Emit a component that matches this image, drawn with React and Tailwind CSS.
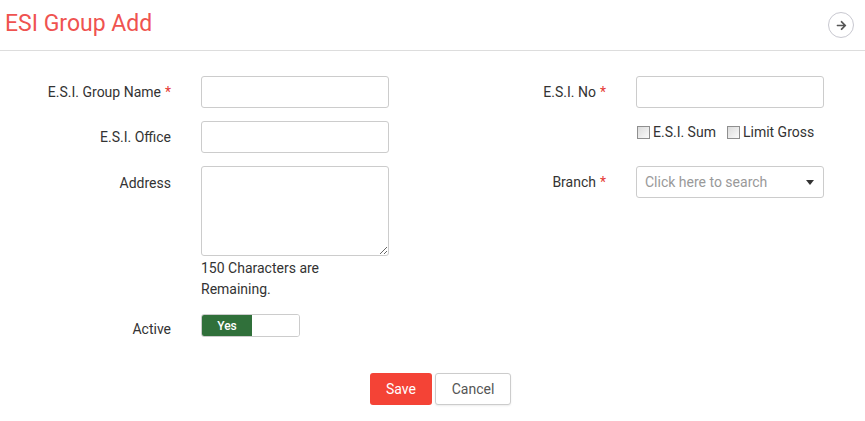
import React, { useState } from 'react';
import { FaArrowRight } from 'react-icons/fa';

const Label = ({ children, required, top, pt }) => (
  <div className={`w-[171px] shrink-0 text-right text-[14px] text-[#333] ${top ? pt || 'pt-[7px]' : 'self-center'}`}>
    {children}
    {required && <span className="ml-[4px] text-[#e53935]">*</span>}
  </div>
);

const TextInput = () => (
  <input
    type="text"
    className="h-[32px] w-[188px] rounded-[3px] border border-[#ccc] bg-white px-[8px] text-[14px] outline-none"
  />
);

const Check = ({ label }) => {
  const [on, setOn] = useState(false);
  return (
    <label className="flex cursor-pointer items-center gap-[3px]" onClick={() => setOn(!on)}>
      <span className="flex h-[13px] w-[13px] items-center justify-center border border-[#8f8f8f] bg-gradient-to-br from-[#dcdcdc] to-[#fafafa] text-[10px] leading-none">
        {on ? '✓' : ''}
      </span>
      <span>{label}</span>
    </label>
  );
};

export default function App() {
  const [active, setActive] = useState(true);
  const [address, setAddress] = useState('');

  return (
    <div className="h-[421px] w-[865px] bg-white font-['Roboto',sans-serif] text-[#333]">
      {/* Header */}
      <div className="flex h-[51px] items-center justify-between border-b border-[#ddd] pl-[5px] pr-[11px]">
        <h1 className="pb-[1px] text-[23px] font-normal text-[#ef5350]">ESI Group Add</h1>
        <button className="flex h-[26px] w-[26px] items-center justify-center rounded-full border border-[#c8c8d0] text-[#555]">
          <FaArrowRight size={11} />
        </button>
      </div>

      {/* Form */}
      <div className="flex pt-[25px]">
        {/* Left column */}
        <div className="flex w-[435px] flex-col gap-[13px]">
          <div className="flex gap-[30px]">
            <Label required>E.S.I. Group Name</Label>
            <TextInput />
          </div>
          <div className="flex gap-[30px]">
            <Label>E.S.I. Office</Label>
            <TextInput />
          </div>
          <div className="flex gap-[30px]">
            <Label top>Address</Label>
            <div className="flex w-[188px] flex-col">
              <textarea
                value={address}
                maxLength={150}
                onChange={(e) => setAddress(e.target.value)}
                className="block h-[90px] w-[188px] rounded-[3px] border border-[#ccc] px-[8px] py-[6px] text-[14px] outline-none"
              />
              <div className="mt-[2px] text-[14px] leading-[21px] text-[#333]">
                {150 - address.length} Characters are Remaining.
              </div>
            </div>
          </div>
          <div className="mt-[1px] flex gap-[30px]">
            <Label top pt="pt-[5px]">Active</Label>
            <button
              onClick={() => setActive(!active)}
              className="flex h-[23px] w-[99px] overflow-hidden rounded-[3px] border border-[#ccc]"
            >
              <span className={`flex h-full w-[50px] items-center justify-center text-[12px] font-medium ${active ? 'bg-[#30703a] text-white' : 'bg-white text-transparent'}`}>
                Yes
              </span>
              <span className="h-full flex-1 bg-white" />
            </button>
          </div>
        </div>

        {/* Right column */}
        <div className="flex flex-col gap-[13px]">
          <div className="flex gap-[30px]">
            <Label required>E.S.I. No</Label>
            <TextInput />
          </div>
          <div className="flex h-[32px] gap-[30px]">
            <div className="w-[171px] shrink-0" />
            <div className="flex items-start gap-[11px] pl-[1px] pt-[1px] text-[14px] leading-[20px]">
              <Check label="E.S.I. Sum" />
              <Check label="Limit Gross" />
            </div>
          </div>
          <div className="flex gap-[30px]">
            <Label required>Branch</Label>
            <div className="flex h-[32px] w-[188px] items-center justify-between rounded-[3px] border border-[#ccc] pl-[8px] pr-[9px] text-[14px] text-[#999]">
              <span>Click here to search</span>
              <span className="h-0 w-0 border-x-[4px] border-t-[5px] border-x-transparent border-t-[#333]" />
            </div>
          </div>
        </div>
      </div>

      {/* Actions */}
      <div className="mt-[33px] flex justify-center gap-[3px] pl-[16px]">
        <button className="h-[32px] w-[62px] rounded-[3px] bg-[#f44336] text-[14px] text-white">Save</button>
        <button className="h-[32px] w-[76px] rounded-[3px] border border-[#ccc] bg-white text-[14px] text-[#555] shadow-[0_1px_2px_rgba(0,0,0,0.08)]">
          Cancel
        </button>
      </div>
    </div>
  );
}
